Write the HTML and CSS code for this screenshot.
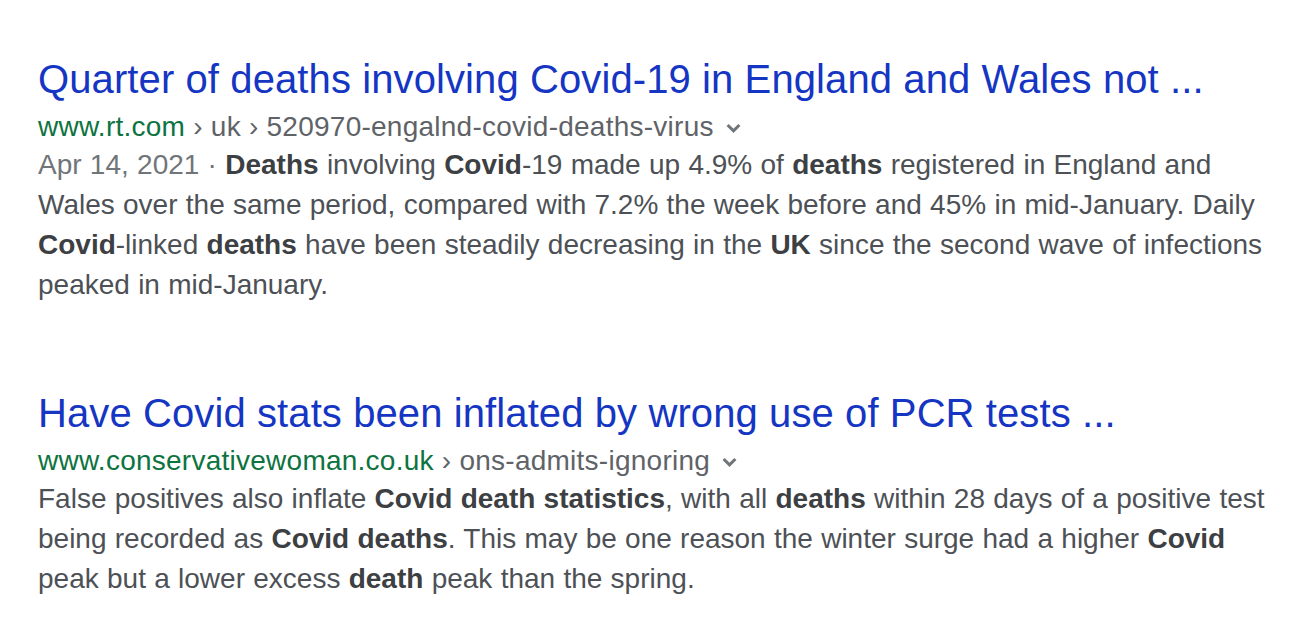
FILE: index.html
```html
<!DOCTYPE html>
<html lang="en">
<head>
<meta charset="utf-8">
<title>Search results</title>
<link rel="stylesheet" href="styles.css">
</head>
<body>
<div class="results">
  <div class="result">
    <a class="title" href="#">Quarter of deaths involving Covid-19 in England and Wales not ...</a>
    <div class="url"><span class="host">www.rt.com</span><span class="crumbs"> › uk › 520970-engalnd-covid-deaths-virus</span><svg class="chev" viewBox="0 0 15 11" width="15" height="11"><path d="M1.6 2 L7.5 7.9 L13.4 2" fill="none" stroke="#70757a" stroke-width="3"/></svg></div>
    <div class="snippet"><span class="date">Apr 14, 2021 · </span><b>Deaths</b> involving <b>Covid</b>-19 made up 4.9% of <b>deaths</b> registered in England and Wales over the same period, compared with 7.2% the week before and 45% in mid-January. Daily <b>Covid</b>-linked <b>deaths</b> have been steadily decreasing in the <b>UK</b> since the second wave of infections peaked in mid-January.</div>
  </div>
  <div class="result">
    <a class="title" href="#">Have Covid stats been inflated by wrong use of PCR tests ...</a>
    <div class="url"><span class="host">www.conservativewoman.co.uk</span><span class="crumbs"> › ons-admits-ignoring</span><svg class="chev" viewBox="0 0 15 11" width="15" height="11"><path d="M1.6 2 L7.5 7.9 L13.4 2" fill="none" stroke="#70757a" stroke-width="3"/></svg></div>
    <div class="snippet">False positives also inflate <b>Covid death statistics</b>, with all <b>deaths</b> within 28 days of a positive test being recorded as <b>Covid deaths</b>. This may be one reason the winter surge had a higher <b>Covid</b> peak but a lower excess <b>death</b> peak than the spring.</div>
  </div>
</div>
</body>
</html>
```
FILE: styles.css
```css
html, body {
  margin: 0;
  padding: 0;
  background: #ffffff;
}
body {
  font-family: "Liberation Sans", Arial, Helvetica, sans-serif;
}
.results {
  padding: 55px 0 0 38px;
  width: 1240px;
  display: flex;
  flex-direction: column;
  gap: 84px;
}
.result {
  display: flex;
  flex-direction: column;
}
.title {
  font-size: 40px;
  line-height: 48px;
  color: #1535c3;
  text-decoration: none;
  white-space: nowrap;
  letter-spacing: 0.1px;
}
.url {
  margin-top: 6px;
  font-size: 28px;
  line-height: 36px;
  white-space: nowrap;
  letter-spacing: 0.25px;
}
.host {
  color: #0d7340;
}
.crumbs {
  color: #5f6368;
}
.chev {
  margin-left: 12px;
  vertical-align: middle;
}
.snippet {
  font-size: 28px;
  line-height: 40px;
  color: #4d5156;
  width: 1236px;
  word-spacing: 0.5px;
}
.snippet b {
  color: #3c4043;
  font-weight: bold;
}
.date {
  color: #70757a;
}
```
